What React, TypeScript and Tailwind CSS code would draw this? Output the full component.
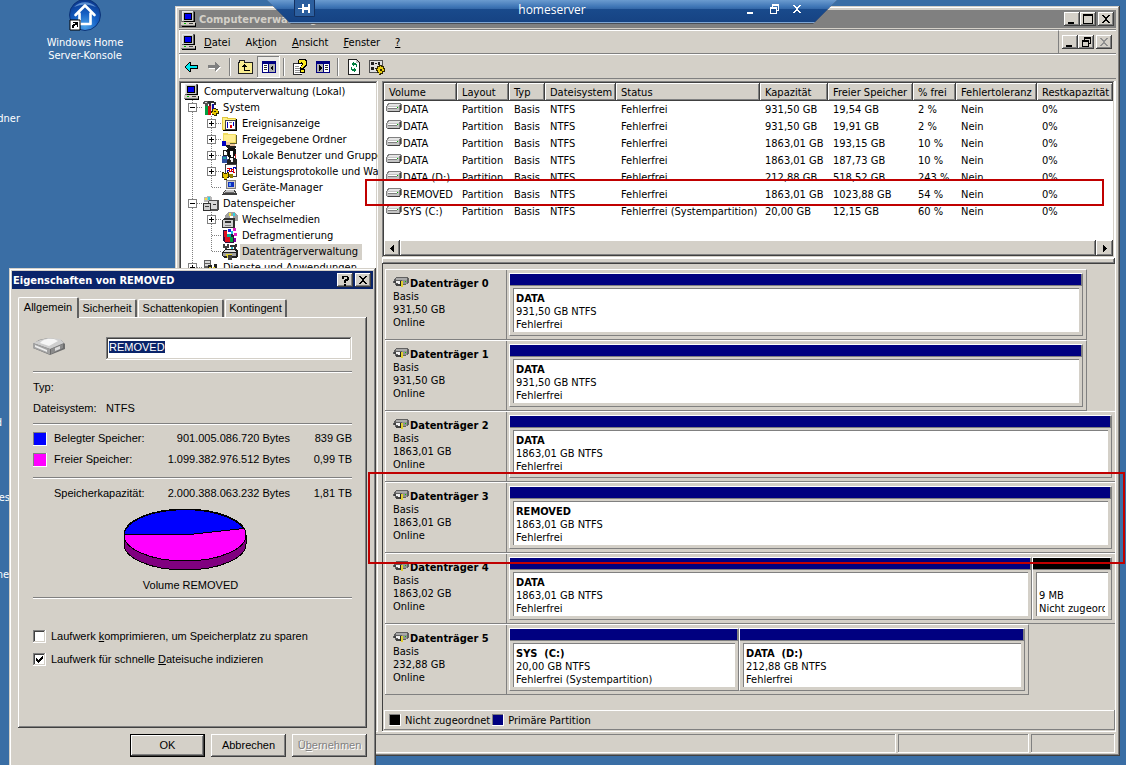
import { useEffect, useRef } from "react";
import type { ReactNode } from "react";

const RAISED =
  "shadow-[inset_-1px_-1px_0_#404040,inset_1px_1px_0_#fff,inset_-2px_-2px_0_#808080]";
const FRAME =
  "shadow-[inset_-1px_-1px_0_#404040,inset_1px_1px_0_#d4d0c8,inset_-2px_-2px_0_#808080,inset_2px_2px_0_#fff]";
const SUNKEN =
  "shadow-[inset_-1px_-1px_0_#fff,inset_1px_1px_0_#808080,inset_-2px_-2px_0_#d4d0c8,inset_2px_2px_0_#404040]";
const THIN_RAISED = "shadow-[inset_-1px_-1px_0_#808080,inset_1px_1px_0_#fff]";
const THIN_SUNKEN = "shadow-[inset_-1px_-1px_0_#fff,inset_1px_1px_0_#808080]";

/* ---------- icons ---------- */

function Svg({ w = 16, h = 16, children }: { w?: number; h?: number; children: ReactNode }) {
  return (
    <svg
      width={w}
      height={h}
      viewBox={`0 0 ${w} ${h}`}
      shapeRendering="crispEdges"
      aria-hidden="true"
      className="block shrink-0"
    >
      {children}
    </svg>
  );
}

function ComputerIcon() {
  return (
    <Svg>
      <path d="M1 0h12l1 1v10H1z" fill="#606060" />
      <path d="M1 0h11v1H2v9H1z" fill="#e8e8e8" />
      <path d="M2 1h10v9H2z" fill="#c8c8c8" />
      <path d="M3 2h8v7H3z" fill="#000" />
      <path d="M4 3h6v5H4z" fill="#0000f0" />
      <path d="M13 1h1v10H3v-1h10z" fill="#000" />
      <path d="M0 12h15v4H1z" fill="#000" />
      <path d="M0 11h14v4H0z" fill="#d4d0c8" />
      <path d="M0 14h14v1H0z" fill="#808080" />
      <path d="M3 12h2v1H3z" fill="#00c000" />
      <path d="M8 12h4v1H8z" fill="#404040" />
    </Svg>
  );
}

function SystemIcon() {
  return (
    <Svg>
      <path d="M0 2h1V1h4v1h2v2H5v2H2V4H0z" fill="#505050" />
      <path d="M2 2h2v1H2z" fill="#d8d8d8" />
      <path d="M2 6h3v9H2z" fill="#00a040" />
      <path d="M5 6h3v9H5z" fill="#d01010" />
      <path d="M5 1h6v1h2v3h-2V3H8v3H6V3H5z" fill="#303030" />
      <path d="M8 4h1v9H8z" fill="#e0e0e0" />
      <path d="M9 4h2v8H9z" fill="#1010a0" />
      <path d="M9 9h2V8h2v1h2v2h1v3h-2v2h-3v-1H9v-2H8v-2h1z" fill="#302800" />
      <path d="M10 9h3v1h2v3h-2v2h-2v-1H9v-2h1z" fill="#e8c800" />
      <path d="M11 11h2v1h-2z" fill="#302800" />
    </Svg>
  );
}

function EventIcon() {
  return (
    <Svg>
      <path d="M1 2h6v1h8v12H1z" fill="#000" />
      <path d="M0 1h6v1h8v12H0z" fill="#e0c840" />
      <path d="M1 2h4v1h8v10H1z" fill="#fff080" />
      <path d="M3 4h11v10H3z" fill="#404040" />
      <path d="M4 5h9v8H4z" fill="#fff" />
      <path d="M5 6h1v6H5zM11 6h1v4h-1z" fill="#0000c0" />
      <path d="M8 9h2v3H8z" fill="#e00000" />
      <path d="M7 6h3v1H7z" fill="#808080" />
    </Svg>
  );
}

function SharedFolderIcon() {
  return (
    <Svg>
      <path d="M1 2h6v1h8v9H1z" fill="#606030" />
      <path d="M1 1h5v1h8v9H1z" fill="#f0dc60" />
      <path d="M2 3h11v7H2z" fill="#ffee90" />
      <path d="M0 9h4v5H0z" fill="#0000c0" />
      <path d="M4 10h4v2h5v2H6v-1H4z" fill="#f0c8a0" />
      <path d="M4 13h4v1h6v2H5z" fill="#202020" />
    </Svg>
  );
}

function UsersIcon() {
  return (
    <Svg>
      <path d="M6 0h6l2 2v4h-1l-1 4H7L5 6V2z" fill="#101010" />
      <path d="M8 3h3v6H9V7H8z" fill="#fff" />
      <path d="M1 2h3v1h1v4H1z" fill="#fff" stroke="#202020" />
      <path d="M0 8h5v3h2v4H0z" fill="#3050a0" />
      <path d="M1 9h3v2H1z" fill="#20a0a0" />
      <path d="M7 10h6l2 2v4H5v-3z" fill="#202020" />
      <path d="M8 10h3v4H9z" fill="#f4f4f4" />
      <path d="M13 6h1v4h-1z" fill="#c02020" />
    </Svg>
  );
}

function PerfIcon() {
  return (
    <Svg>
      <path d="M3 0h12v13H3z" fill="#404040" />
      <path d="M4 1h10v11H4z" fill="#fff" />
      <path d="M5 8V6h2V4h2v3h2V3h2v2" fill="none" stroke="#0000c0" />
      <path d="M5 4h2v3h2V5h2v3h2" fill="none" stroke="#e00000" />
      <path d="M0 8h2v1h3V8h2v6H5v2H2v-2H0z" fill="#302800" />
      <path d="M1 9h1v1h3V9h1v4H5v2H2v-2H1z" fill="#e0c000" />
      <path d="M7 10h4v4H8z" fill="#908000" />
    </Svg>
  );
}

function DeviceManagerIcon() {
  return (
    <Svg>
      <path d="M4 0h10v9H4z" fill="#808080" />
      <path d="M5 1h8v7H5z" fill="#d4d0c8" />
      <path d="M6 2h6v5H6z" fill="#1030c0" />
      <path d="M7 3h2v3H7z" fill="#60a0f0" />
      <path d="M3 10h10l2 4v1H0z" fill="#404040" />
      <path d="M4 10h8l1 3H2z" fill="#c8c8c8" />
      <path d="M3 12h9v1H3z" fill="#707070" />
    </Svg>
  );
}

function StorageIcon() {
  return (
    <Svg>
      <path d="M1 1h3V0h4v1h1v5H1z" fill="#b8b8b8" />
      <path d="M2 2h2v2H2z" fill="#f0e040" />
      <path d="M5 1h2v3H5z" fill="#30d0e0" />
      <path d="M5 5l2-1h9v9l-2 2H5z" fill="#505050" />
      <path d="M6 5h8v8H6z" fill="#d8d8d8" />
      <path d="M0 7h8v8H0z" fill="#303030" />
      <path d="M1 8h6v6H1z" fill="#d0d0d0" />
      <path d="M2 10h4v1H2z" fill="#404040" />
      <path d="M10 8h3v1h-3z" fill="#303030" />
    </Svg>
  );
}

function RemovableIcon() {
  return (
    <Svg>
      <path d="M6 0h6l4 3v6h-5V7H3V4z" fill="#a0a0a0" />
      <path d="M7 1h2v3H7z" fill="#f0e040" />
      <path d="M11 1h2v3h-2z" fill="#30d0e0" />
      <path d="M8 4h3v2H8z" fill="#fff" />
      <path d="M0 8l2-2h10l1 1v9H0z" fill="#303030" />
      <path d="M1 8h10v7H1z" fill="#d0d0d0" />
      <path d="M3 9h6v2H3z" fill="#303030" />
      <path d="M3 13h6v1H3z" fill="#808080" />
    </Svg>
  );
}

function DefragIcon() {
  return (
    <Svg>
      <path d="M1 2h4v4h5l2 2v7H3l-2-2z" fill="#301040" />
      <path d="M2 3h3v6H2z" fill="#e01020" />
      <path d="M5 6h4v3H5z" fill="#00b0a0" />
      <path d="M3 9h5v5H3z" fill="#e01020" />
      <path d="M8 9h3v5H8z" fill="#00a040" />
      <path d="M6 1h3v3H6z" fill="#2020e0" />
      <path d="M11 0h3v3h-3zM12 5h3v3h-3z" fill="#e020c0" />
      <path d="M12 10h2v4h-2z" fill="#8000a0" />
      <path d="M9 3h2v3H9z" fill="#20c0e0" />
    </Svg>
  );
}

function DiskManagementIcon() {
  return (
    <Svg>
      <path d="M1 0h2v2h2V0h2v4H5v2H3V4H1z" fill="#404040" />
      <path d="M8 1h5V0h2v3h-1v3h-2V3H8z" fill="#303030" />
      <path d="M9 3h2v3H9z" fill="#30b0c0" />
      <path d="M0 8l3-3h11l2 2v5l-2 2H3l-3-2z" fill="#202020" />
      <path d="M3 6h10l1 2H2z" fill="#e0e0e0" />
      <path d="M1 9h13v3H1z" fill="#a0a0a0" />
      <path d="M4 10h6v4H5z" fill="#e0d030" />
      <path d="M6 11h4v5H6z" fill="#404040" />
    </Svg>
  );
}

function ServicesIcon() {
  return (
    <Svg>
      <path d="M1 0h7v9H1z" fill="#606060" />
      <path d="M2 1h5v2H2zM2 4h5v2H2z" fill="#d8d8d8" />
      <path d="M5 5h4v3h2V4h3v4h2v8H5z" fill="#202020" />
      <path d="M6 7h2v3h2V7h2v5H6z" fill="#e8d020" />
    </Svg>
  );
}

function VolumeIcon() {
  return (
    <Svg h={11}>
      <path d="M2 0h13v1h1v6h-1v1h-1v1H1V8H0V3h1V1h1z" fill="#808080" />
      <path d="M3 1h11v1h-1v1H2V2h1z" fill="#e4e4e4" />
      <path d="M1 3h12v5H1z" fill="#c4c4c4" />
      <path d="M2 4h9v1H2z" fill="#fff" />
      <path d="M2 5h9v1H2z" fill="#808080" />
      <path d="M11 4h1v1h-1z" fill="#00b000" />
      <path d="M14 2h1v5h-1zM2 8h12v1H2z" fill="#404040" />
    </Svg>
  );
}

function DiskIcon() {
  return (
    <Svg h={11}>
      <path d="M3 0h12v1h1v5h-1v1h-2v1H2V6H0V4h1V2h1V1h1z" fill="#606060" />
      <path d="M3 1h11v2H3z" fill="#a8a8a8" />
      <path d="M9 3h5v4H9z" fill="#909090" />
      <path d="M12 4h1v1h-1z" fill="#00d000" />
      <path d="M1 4h7v2H1z" fill="#404040" />
      <path d="M3 4h4v3H5V6H3z" fill="#f0f0f0" />
      <path d="M3 7h4v2H3z" fill="#404040" />
      <path d="M8 4h2v6H8z" fill="#e0d030" />
      <path d="M7 4h1v5H7z" fill="#202020" />
    </Svg>
  );
}

function ArrowIcon({ forward }: { forward?: boolean }) {
  return forward ? (
    <Svg>
      <path d="M2 7h7V4h1v1h1v1h1v1h1v1h1v1h-1v1h-1v1h-1v1h-1v1H9v-3H2z" fill="#fff" />
      <path d="M1 6h7V3h1v1h1v1h1v1h1v1h1v1h-1v1h-1v1h-1v1H9v1H8V9H1z" fill="#808080" />
    </Svg>
  ) : (
    <Svg>
      <path d="M1 7h1V6h1V5h1V4h1V3h2v3h7v4H7v3H5v-1H4v-1H3v-1H2V9H1z" fill="#000" />
      <path d="M2 8V7h1V6h1V5h1V4h1v3h7v2H6v3H5v-1H4v-1H3V9H2z" fill="#00e8f0" />
    </Svg>
  );
}

function FolderUpIcon() {
  return (
    <Svg>
      <path d="M1 1h6v2h8v12H0V3h1z" fill="#202020" />
      <path d="M2 2h4v2h8v10H1V4h1z" fill="#f8ec90" />
      <path d="M6 5h1v1h1v1h1v1H7v3h5v1H6V8H4V7h1V6h1z" fill="#000" />
    </Svg>
  );
}

function PaneIcon({ right }: { right?: boolean }) {
  return (
    <Svg>
      <path d="M1 2h14v12H1z" fill="#000080" />
      {right ? (
        <>
          <path d="M2 5h6v8H2z" fill="#b0b0b0" />
          <path d="M9 5h5v8H9z" fill="#fff" />
          <path d="M10 6h3v1h-3zM10 8h3v1h-3zM10 10h3v1h-3z" fill="#303030" />
          <path d="M4 6l3 3-3 3z" fill="#000" />
        </>
      ) : (
        <>
          <path d="M2 5h5v8H2z" fill="#fff" />
          <path d="M8 5h6v8H8z" fill="#b0b0b0" />
          <path d="M3 6h3v1H3zM3 8h3v1H3zM3 10h3v1H3z" fill="#303030" />
          <path d="M12 6L9 9l3 3z" fill="#000" />
        </>
      )}
    </Svg>
  );
}

function HelpIcon() {
  return (
    <Svg>
      <path d="M1 4h9v12H1z" fill="#303030" />
      <path d="M2 5h8v10H2z" fill="#fff" />
      <path d="M3 7h4v1H3zM3 9h5v1H3zM3 11h5v1H3zM3 13h5v1H3z" fill="#909090" />
      <path d="M6 1h1V0h7v1h1v6h-1v1h-1v1h-1v1H8V8h1V6h1V5H6z" fill="#000" />
      <path d="M7 1h6v1h1v4h-1v1h-1v1h-1v1H9V7h1V6h1V4h-1V3H9v1H7z" fill="#f8e820" />
      <path d="M8 10h5v4H8z" fill="#000" />
      <path d="M9 11h3v2H9z" fill="#f8e820" />
    </Svg>
  );
}

function RefreshIcon() {
  return (
    <Svg>
      <path d="M2 0h9v1h1v1h1v1h1v13H2z" fill="#202020" />
      <path d="M3 1h7v3h3v11H3z" fill="#fff" />
      <path d="M10 1h1v1h1v1h1v1h-3z" fill="#c0c0c0" />
      <path d="M7 3h1v1h2v1h1v3h-1V6H8v1H7V6H6V5H5V5h1V4h1z" fill="#008040" />
      <path d="M9 13H8v-1H6v-1H5V8h1v2h2V9h1v1h1v1h1v0h-1v1H9z" fill="#008040" />
    </Svg>
  );
}

function SettingsIcon() {
  return (
    <Svg>
      <path d="M0 1h14v13H0z" fill="#505050" />
      <path d="M1 2h12v11H1z" fill="#e0e0e0" />
      <path d="M2 3h3v3H2zM6 4h2v1H6zM9 3h2v3H9zM2 8h3v3H2zM6 9h2v1H6z" fill="#202020" />
      <path d="M8 7h2V6h3v1h2v2h1v4h-2v2h-2v1h-2v-2H8v-2H7V9h1z" fill="#302800" />
      <path d="M9 8h2V7h1v1h2v2h1v2h-2v2h-2v1h-1v-2H9v-2H8v-1h1z" fill="#e8cc10" />
      <path d="M11 10h2v2h-2z" fill="#302800" />
    </Svg>
  );
}

function HomeServerIcon() {
  return (
    <svg width="34" height="34" viewBox="0 0 34 34" aria-hidden="true">
      <defs>
        <radialGradient id="orb" cx="0.5" cy="0.85" r="0.8">
          <stop offset="0" stopColor="#4ba3ea" />
          <stop offset="0.5" stopColor="#1560c4" />
          <stop offset="1" stopColor="#0b3a92" />
        </radialGradient>
      </defs>
      <circle cx="17" cy="15" r="15.500" fill="url(#orb)" stroke="#0c3478" />
      <path d="M6 7a15 15 0 0 1 22 0q-11-5-22 0z" fill="#8fc0f0" opacity="0.6" />
      <path
        d="M7.500 15L17 5.500l9.500 9.500M11.500 13.500V24h11V13.500"
        fill="none"
        stroke="#fff"
        strokeWidth="2.600"
        strokeLinejoin="round"
        strokeLinecap="round"
      />
      <path d="M2 20h10v10H2z" fill="#fff" stroke="#000" strokeWidth="1" />
      <path d="M5 22h5v5H9v-2H7v1H6v2H4v-3h1v-1h2v-1H5z" fill="#000" />
    </svg>
  );
}

function DriveIcon() {
  return (
    <svg width="32" height="20" viewBox="0 0 32 20" aria-hidden="true" className="block">
      <path d="M0 7L6 3l9-2 13 2 4 4v5L17 18 0 11z" fill="#6c6c6c" />
      <path d="M0 6l7-3 8-2 12 1 4 4-14 6z" fill="#cfcfcf" />
      <path d="M7 6q4-5 14-4l4 2-9 5z" fill="#f6f6f6" />
      <path d="M0 6l17 6v5.500L0 11z" fill="#a2a2a2" />
      <path d="M2 8l12 5v2L2 10z" fill="#ececec" />
      <path d="M18 12l12-5v4l-12 6z" fill="#8c8c8c" />
      <path d="M22 11l5-2v3l-5 2z" fill="#dcdcdc" />
    </svg>
  );
}

type GlyphName = "min" | "max" | "restore" | "close" | "help";

function Glyph({ name, color = "#000" }: { name: GlyphName; color?: string }) {
  const paths: Record<GlyphName, string> = {
    min: "M2 9h6v2H2z",
    max: "M1 1h10v10H1zM2 3v7h8V3z",
    restore: "M4 1h7v7H9v3H2V4h2zM5 3v1h4v3h1V3zM3 6v4h5V6z",
    close: "M2 2h2v1h1v1h2V3h1V2h2v1H9v1H8v1H7v2h1v1h1v1h1v1H8V9H7V8H5v1H4v1H2V9h1V8h1V7h1V5H4V4H3V3H2z",
    help: "M3 2h6v1h1v3H9v1H7v2H5V6h1V5h2V3H5v2H3zM5 10h2v2H5z",
  };
  return (
    <Svg w={12} h={12}>
      <path d={paths[name]} fill={color} fillRule="evenodd" />
    </Svg>
  );
}

function CaptionButton({ name, label, disabled }: { name: GlyphName; label: string; disabled?: boolean }) {
  return (
    <button
      type="button"
      aria-label={label}
      disabled={disabled}
      className={`flex h-[14px] w-4 items-center justify-center bg-[#d4d0c8] ${RAISED}`}
    >
      <Glyph name={name} color={disabled ? "#909090" : "#000"} />
    </button>
  );
}

/* ---------- tree ---------- */

function Connector({ box, last, line }: { box?: "+" | "-"; last?: boolean; line?: boolean }) {
  return (
    <Svg w={19}>
      <path d={last ? "M8.500 0V8" : "M8.500 0V16"} stroke="#808080" strokeDasharray="1 1" />
      {!line && <path d="M9 7.500H19" stroke="#808080" strokeDasharray="1 1" />}
      {box && (
        <>
          <path d="M4 3h9v9H4z" fill="#808080" />
          <path d="M5 4h7v7H5z" fill="#fff" />
          <path d={box === "+" ? "M6 7h5v1H6zM8 5h1v5H8z" : "M6 7h5v1H6z"} fill="#000" />
        </>
      )}
    </Svg>
  );
}

type Node = { label: string; icon: ReactNode; level: number; box?: "+" | "-"; last?: boolean; selected?: boolean };

const tree: Node[] = [
  { label: "Computerverwaltung (Lokal)", icon: <ComputerIcon />, level: 0 },
  { label: "System", icon: <SystemIcon />, level: 1, box: "-" },
  { label: "Ereignisanzeige", icon: <EventIcon />, level: 2, box: "+" },
  { label: "Freigegebene Ordner", icon: <SharedFolderIcon />, level: 2, box: "+" },
  { label: "Lokale Benutzer und Gruppen", icon: <UsersIcon />, level: 2, box: "+" },
  { label: "Leistungsprotokolle und Warnungen", icon: <PerfIcon />, level: 2, box: "+" },
  { label: "Geräte-Manager", icon: <DeviceManagerIcon />, level: 2, last: true },
  { label: "Datenspeicher", icon: <StorageIcon />, level: 1, box: "-" },
  { label: "Wechselmedien", icon: <RemovableIcon />, level: 2, box: "+" },
  { label: "Defragmentierung", icon: <DefragIcon />, level: 2 },
  { label: "Datenträgerverwaltung", icon: <DiskManagementIcon />, level: 2, last: true, selected: true },
  { label: "Dienste und Anwendungen", icon: <ServicesIcon />, level: 1, box: "+", last: true },
];

function Tree() {
  return (
    <ul role="tree" className={`w-[199px] shrink-0 overflow-hidden bg-white px-[2px] py-[3px] ${SUNKEN}`}>
      {tree.map((n) => (
        <li key={n.label} role="treeitem" aria-selected={!!n.selected} className="flex h-4 items-center pl-[3px] whitespace-nowrap">
          {n.level === 2 && <Connector line />}
          {n.level > 0 && <Connector box={n.box} last={n.last} />}
          {n.icon}
          <span className={`ml-[2px] px-[2px] leading-4 ${n.selected ? "bg-[#d4d0c8] pr-1" : ""}`}>{n.label}</span>
        </li>
      ))}
    </ul>
  );
}

/* ---------- volume list ---------- */

const columns = ["Volume", "Layout", "Typ", "Dateisystem", "Status", "Kapazität", "Freier Speicher", "% frei", "Fehlertoleranz", "Restkapazität"];

const volumes = [
  ["DATA", "Fehlerfrei", "931,50 GB", "19,54 GB", "2 %"],
  ["DATA", "Fehlerfrei", "931,50 GB", "19,91 GB", "2 %"],
  ["DATA", "Fehlerfrei", "1863,01 GB", "193,15 GB", "10 %"],
  ["DATA", "Fehlerfrei", "1863,01 GB", "187,73 GB", "10 %"],
  ["DATA (D:)", "Fehlerfrei", "212,88 GB", "518,52 GB", "243 %"],
  ["REMOVED", "Fehlerfrei", "1863,01 GB", "1023,88 GB", "54 %"],
  ["SYS (C:)", "Fehlerfrei (Systempartition)", "20,00 GB", "12,15 GB", "60 %"],
];

function VolumeList() {
  return (
    <div className={`bg-white p-[2px] ${SUNKEN}`}>
      <table className="w-full table-fixed border-collapse">
        <colgroup>
          <col className="w-[73px]" />
          <col className="w-[52px]" />
          <col className="w-[36px]" />
          <col className="w-[71px]" />
          <col className="w-[144px]" />
          <col className="w-[68px]" />
          <col className="w-[85px]" />
          <col className="w-[43px]" />
          <col className="w-[81px]" />
          <col />
        </colgroup>
        <thead>
          <tr className="h-[18px]">
            {columns.map((c) => (
              <th key={c} className={`overflow-hidden bg-[#d4d0c8] p-0 pl-[5px] text-left font-normal whitespace-nowrap ${RAISED}`}>
                {c}
              </th>
            ))}
          </tr>
        </thead>
        <tbody>
          {volumes.map(([name, status, cap, free, pct], i) => (
            <tr key={i} className="h-[17px] whitespace-nowrap">
              <td className="p-0">
                <div className="flex items-start gap-[1px] pl-[2px]">
                  <VolumeIcon />
                  {name}
                </div>
              </td>
              {["Partition", "Basis", "NTFS", status, cap, free, pct, "Nein", "0%"].map((v, j) => (
                <td key={j} className="p-0 pl-[5px]">
                  {v}
                </td>
              ))}
            </tr>
          ))}
        </tbody>
      </table>
      <div className="mt-5 flex h-4 bg-[#d4d0c8]">
        <button type="button" aria-label="Nach links" className={`flex w-4 items-center justify-center ${RAISED}`}>
          <Svg w={4} h={7}>
            <path d="M3 0h1v7H3zM2 1h1v5H2zM1 2h1v3H1zM0 3h1v1H0z" />
          </Svg>
        </button>
        <div className={`flex-1 ${RAISED}`} />
        <button type="button" aria-label="Nach rechts" className={`flex w-[17px] items-center justify-center ${RAISED}`}>
          <Svg w={4} h={7}>
            <path d="M0 0h1v7H0zM1 1h1v5H1zM2 2h1v3H2zM3 3h1v1H3z" />
          </Svg>
        </button>
      </div>
    </div>
  );
}

/* ---------- disk view ---------- */

type Part = { name: string; size: string; state: string; width: string; free?: boolean };
type Disk = { size: string; margin: string; parts: Part[] };

const disks: Disk[] = [
  { size: "931,50 GB", margin: "mr-[28px] border-r pr-[3px]", parts: [{ name: "DATA", size: "931,50 GB NTFS", state: "Fehlerfrei", width: "flex-1" }] },
  { size: "931,50 GB", margin: "mr-[28px] border-r pr-[3px]", parts: [{ name: "DATA", size: "931,50 GB NTFS", state: "Fehlerfrei", width: "flex-1" }] },
  { size: "1863,01 GB", margin: "pr-[3px]", parts: [{ name: "DATA", size: "1863,01 GB NTFS", state: "Fehlerfrei", width: "flex-1" }] },
  { size: "1863,01 GB", margin: "pr-[3px]", parts: [{ name: "REMOVED", size: "1863,01 GB NTFS", state: "Fehlerfrei", width: "flex-1" }] },
  {
    size: "1863,02 GB",
    margin: "pr-[3px]",
    parts: [
      { name: "DATA", size: "1863,01 GB NTFS", state: "Fehlerfrei", width: "flex-1" },
      { name: "", size: "9 MB", state: "Nicht zugeordnet", width: "w-[80px]", free: true },
    ],
  },
  {
    size: "232,88 GB",
    margin: "mr-[86px] border-r pr-[3px]",
    parts: [
      { name: "SYS  (C:)", size: "20,00 GB NTFS", state: "Fehlerfrei (Systempartition)", width: "w-[230px]" },
      { name: "DATA  (D:)", size: "212,88 GB NTFS", state: "Fehlerfrei", width: "flex-1" },
    ],
  },
];

function Partition({ part }: { part: Part }) {
  return (
    <div className={`min-w-0 border border-t-white border-r-[#808080] border-b-[#808080] border-l-white ${part.width}`}>
      <div className={`h-3 border-r border-b border-[#808080] ${part.free ? "bg-black" : "bg-[#000080]"}`} />
      <div className="mx-[3px] mt-[2px] mb-[3px] h-11 overflow-hidden border-t border-l border-[#808080] bg-white pt-[3px] pr-[3px] pl-[2px]">
        <div className="overflow-hidden leading-[13px] whitespace-pre">
          <div className="h-[13px] font-bold">{part.name}</div>
          <div>{part.size}</div>
          <div>{part.state}</div>
        </div>
      </div>
    </div>
  );
}

function DiskView() {
  return (
    <div className="flex flex-col pt-[5px] pl-[2px]">
      {disks.map((d, i) => (
        <div key={i} className={`flex h-[71px] border-t border-b border-t-white border-b-[#808080] border-r-[#808080] ${d.margin}`}>
          <div className="mr-[2px] w-[122px] shrink-0 border-r border-l border-r-[#808080] border-l-white pt-[7px] pl-[7px] leading-[13px]">
            <div className="flex h-[13px] items-start gap-px font-bold whitespace-nowrap">
              <DiskIcon />
              Datenträger {i}
            </div>
            <div>Basis</div>
            <div>{d.size}</div>
            <div>Online</div>
          </div>
          <div className="flex min-w-0 flex-1 pt-[3px] pb-[3px]">
            {d.parts.map((p) => (
              <Partition key={p.name} part={p} />
            ))}
          </div>
        </div>
      ))}
    </div>
  );
}

/* ---------- main window ---------- */

function MenuItem({ pre = "", hot, post = "" }: { pre?: string; hot: string; post?: string }) {
  return (
    <button type="button" className="leading-4">
      {pre}
      <u>{hot}</u>
      {post}
    </button>
  );
}

function ToolButton({ label, pressed, children }: { label: string; pressed?: boolean; children: ReactNode }) {
  return (
    <button
      type="button"
      aria-label={label}
      className={`flex h-[22px] w-[23px] items-center justify-center ${pressed ? `bg-[#eae8e4] ${THIN_SUNKEN}` : ""}`}
    >
      {children}
    </button>
  );
}

function ToolSeparator() {
  return <div className="mx-[3px] h-[18px] w-[2px] border-r border-l border-r-white border-l-[#808080]" />;
}

function ManagementWindow() {
  return (
    <section aria-label="Computerverwaltung" className={`mt-[6px] mr-[6px] ml-[175px] bg-[#d4d0c8] px-1 pt-1 pb-[3px] ${FRAME}`}>
      <header className="flex h-[18px] items-center bg-[#808080] pr-[2px] pl-[2px]">
        <ComputerIcon />
        <h1 className="ml-[2px] flex-1 text-[11px] font-bold text-[#d4d0c8]">Computerverwaltung</h1>
        <CaptionButton name="min" label="Minimieren" />
        <CaptionButton name="max" label="Maximieren" />
        <div className="w-[2px]" />
        <CaptionButton name="close" label="Schließen" />
      </header>

      <div className="mt-px flex h-[25px] border-t border-b border-t-[#808080] border-b-[#808080]">
        <nav className="flex flex-1 items-center gap-[7px] border-t border-l border-white pl-px">
          <ComputerIcon />
          <div className="flex items-center gap-[15px] pt-px">
            <MenuItem hot="D" post="atei" />
            <MenuItem pre="Ak" hot="t" post="ion" />
            <MenuItem hot="A" post="nsicht" />
            <MenuItem hot="F" post="enster" />
            <MenuItem hot="?" />
          </div>
        </nav>
        <div className="flex items-center border-t border-l border-t-white border-l-[#808080] pr-1 pl-[3px]">
          <CaptionButton name="min" label="Fenster minimieren" />
          <CaptionButton name="restore" label="Fenster wiederherstellen" />
          <div className="w-[2px]" />
          <CaptionButton name="close" label="Fenster schließen" disabled />
        </div>
      </div>

      <div role="toolbar" aria-label="Werkzeuge" className="flex h-[25px] items-center border-t border-b border-l border-white border-b-[#808080]">
        <ToolButton label="Zurück"><ArrowIcon /></ToolButton>
        <ToolButton label="Vorwärts"><ArrowIcon forward /></ToolButton>
        <ToolSeparator />
        <ToolButton label="Aufwärts"><FolderUpIcon /></ToolButton>
        <ToolButton label="Konsolenstruktur" pressed><PaneIcon /></ToolButton>
        <ToolSeparator />
        <ToolButton label="Hilfe"><HelpIcon /></ToolButton>
        <ToolButton label="Aktionsbereich"><PaneIcon right /></ToolButton>
        <ToolSeparator />
        <ToolButton label="Aktualisieren"><RefreshIcon /></ToolButton>
        <ToolButton label="Einstellungen"><SettingsIcon /></ToolButton>
      </div>

      <div className="mt-[2px] flex gap-1">
        <Tree />
        <div className="flex min-w-0 flex-1 flex-col border-r border-b border-white">
          <VolumeList />
          <div className={`h-[6px] ${RAISED}`} />
          <div className="flex flex-col border-l border-[#404040] pb-px">
            <DiskView />
            <div className={`mt-[15px] ml-px flex h-5 items-center pl-[5px] ${THIN_RAISED}`}>
              <span className={`h-3 w-3 bg-black ${THIN_SUNKEN}`} />
              <span className="ml-1">Nicht zugeordnet</span>
              <span className={`ml-[2px] h-3 w-3 bg-[#000080] ${THIN_SUNKEN}`} />
              <span className="ml-1">Primäre Partition</span>
            </div>
          </div>
        </div>
      </div>

      <footer className="mt-[2px] flex h-[19px] gap-[2px] pr-px">
        <div className={`flex-1 ${THIN_SUNKEN}`} />
        <div className={`w-[131px] ${THIN_SUNKEN}`} />
        <div className={`w-[84px] ${THIN_SUNKEN}`} />
      </footer>
    </section>
  );
}

/* ---------- properties dialog ---------- */

function Rule() {
  return <div className="h-[2px] border-t border-b border-t-[#808080] border-b-white" />;
}

function SpaceRow({ color, label, bytes, size }: { color?: string; label: string; bytes: string; size: string }) {
  return (
    <div className="flex h-[21px] items-center">
      {color ? <span className={`h-[14px] w-[14px] ${color} ${THIN_SUNKEN}`} /> : <span className="w-[14px]" />}
      <span className="ml-[7px] w-[100px]">{label}</span>
      <span className="flex-1 text-right">{bytes}</span>
      <span className="w-[62px] text-right">{size}</span>
    </div>
  );
}

function CheckRow({ id, checked, children }: { id: string; checked?: boolean; children: ReactNode }) {
  return (
    <div className="flex h-[23px] items-center">
      <span className="relative h-[13px] w-[13px]">
        <input id={id} type="checkbox" defaultChecked={checked} className={`peer block h-[13px] w-[13px] appearance-none bg-white ${SUNKEN}`} />
        <span className="pointer-events-none absolute top-[3px] left-[3px] hidden peer-checked:block">
          <Svg w={7} h={7}>
            <path d="M0 2h1v1h1v1h1V3h1V2h1V1h1V0h1v3H6v1H5v1H4v1H3v1H2V6H1V5H0z" />
          </Svg>
        </span>
      </span>
      <label htmlFor={id} className="ml-[5px]">
        {children}
      </label>
    </div>
  );
}

function Pie() {
  return (
    <svg width="124" height="64" viewBox="0 0 124 64" role="img" aria-label="Speicherbelegung" shapeRendering="crispEdges">
      <path d="M1 27v9a61 26 0 0 0 122 0v-9z" fill="#800080" stroke="#000" />
      <ellipse cx="62" cy="27" rx="61" ry="26" fill="#f0f" stroke="#000" />
      <path d="M1 26A61 26 0 0 1 120.500 20.500L62 27z" fill="#00f" stroke="#000" />
    </svg>
  );
}

function Dialog() {
  const field = useRef<HTMLInputElement>(null);
  useEffect(() => {
    field.current?.focus({ preventScroll: true });
    field.current?.select();
  }, []);

  return (
    <section
      role="dialog"
      aria-label="Eigenschaften von REMOVED"
      className={`absolute top-[268px] left-[9px] w-[367px] bg-[#d4d0c8] px-[3px] pt-[3px] pb-[11px] [font-family:'Liberation_Sans',Arial,sans-serif] ${FRAME}`}
    >
      <header className="flex h-[18px] items-center bg-[#0a246a] pr-[2px] pl-px [font-family:'DejaVu_Sans_Condensed',sans-serif]">
        <h2 className="flex-1 text-[11px] font-bold text-white">Eigenschaften von REMOVED</h2>
        <CaptionButton name="help" label="Hilfe" />
        <div className="w-[2px]" />
        <CaptionButton name="close" label="Dialog schließen" />
      </header>

      <div className="px-[6px] pt-2">
        <div role="tablist" className="flex items-end">
          <button
            type="button"
            role="tab"
            aria-selected="true"
            className="relative z-10 -mb-px h-[21px] w-[61px] rounded-t-[2px] border-t border-r-2 border-l border-white border-r-[#606060] bg-[#d4d0c8] pb-[2px]"
          >
            Allgemein
          </button>
          <button type="button" role="tab" className="h-[18px] w-[58px] rounded-t-[2px] border-t border-r-2 border-white border-r-[#606060]">
            Sicherheit
          </button>
          <button type="button" role="tab" className="ml-px h-[18px] w-[86px] rounded-t-[2px] border-t border-r-2 border-l border-white border-r-[#606060]">
            Schattenkopien
          </button>
          <button type="button" role="tab" className="ml-px h-[18px] w-[62px] rounded-t-[2px] border-t border-r-2 border-l border-white border-r-[#606060]">
            Kontingent
          </button>
        </div>

        <div role="tabpanel" className={`h-[411px] pr-[15px] pl-[15px] ${RAISED}`}>
          <div className="flex h-[54px] items-start pt-5">
            <div className="w-[73px]">
              <DriveIcon />
            </div>
            <input
              ref={field}
              aria-label="Volumebezeichnung"
              defaultValue="REMOVED"
              className={`h-[23px] min-w-0 flex-1 bg-white px-[3px] pb-1 outline-none selection:bg-[#0a246a] selection:text-white ${SUNKEN}`}
            />
          </div>
          <Rule />
          <div className="flex h-[50px] flex-col pt-1">
            <div className="flex h-[21px] items-center">Typ:</div>
            <div className="flex h-[21px] items-center">
              <span className="w-[73px]">Dateisystem:</span>
              <span>NTFS</span>
            </div>
          </div>
          <Rule />
          <div className="pt-[3px] pb-[7px]">
            <SpaceRow color="bg-[#0000ff]" label="Belegter Speicher:" bytes="901.005.086.720 Bytes" size="839 GB" />
            <SpaceRow color="bg-[#ff00ff]" label="Freier Speicher:" bytes="1.099.382.976.512 Bytes" size="0,99 TB" />
          </div>
          <Rule />
          <div className="pt-[4px]">
            <SpaceRow label="Speicherkapazität:" bytes="2.000.388.063.232 Bytes" size="1,81 TB" />
          </div>
          <div className="flex flex-col items-center pt-1 pr-[15px]">
            <Pie />
          </div>
          <div className="flex h-[25px] items-center justify-center pt-[2px] pr-1">Volume REMOVED</div>
          <Rule />
          <div className="pt-[26px]">
            <CheckRow id="compress">
              Laufwerk <u>k</u>omprimieren, um Speicherplatz zu sparen
            </CheckRow>
            <CheckRow id="index" checked>
              Laufwerk für schnelle <u>D</u>ateisuche indizieren
            </CheckRow>
          </div>
        </div>

        <div className="mt-[6px] flex justify-end gap-[6px]">
          <div className="bg-black p-px">
            <button type="button" className={`block h-[21px] w-[73px] bg-[#d4d0c8] ${RAISED}`}>
              OK
            </button>
          </div>
          <button type="button" className={`h-[23px] w-[75px] ${RAISED}`}>
            Abbrechen
          </button>
          <button type="button" disabled className={`h-[23px] w-[75px] text-[#808080] [text-shadow:1px_1px_0_#fff] ${RAISED}`}>
            Ü<u>b</u>ernehmen
          </button>
        </div>
      </div>
    </section>
  );
}

/* ---------- remote session bar ---------- */

function SessionBar() {
  return (
    <div className="absolute top-0 left-[267px] flex h-6 w-[570px] bg-[#4a4f58] [clip-path:polygon(0_0,100%_0,calc(100%_-_24px)_100%,24px_100%)]">
      <div className="flex h-[23px] flex-1 items-start justify-between border-b border-[#7fa6d4] bg-[linear-gradient(#6b9bcf,#3f76b6_30%,#3468a8_40%,#194a8c_42%,#164383)] pr-[34px] pl-[27px]">
        <button type="button" aria-label="Anheften" className="flex h-[17px] w-[21px] items-center justify-center rounded-b-[2px] border border-t-0 border-[#14305f] bg-[#2c5f9f]">
          <Svg w={14} h={9}>
            <path d="M0 4h4v1H0zM4 0h2v9H4zM6 3h4v3H6zM10 0h2v9h-2z" fill="#fff" />
          </Svg>
        </button>
        <span className="flex-1 pl-[44px] text-center text-[12px] leading-5 text-white [font-family:'Open_Sans','Noto_Sans',sans-serif]">homeserver</span>
        <div className="flex items-center gap-[11px] pt-[3px]">
          <button type="button" aria-label="Sitzung minimieren"><Glyph name="min" color="#fff" /></button>
          <button type="button" aria-label="Sitzung wiederherstellen"><Glyph name="restore" color="#fff" /></button>
          <button type="button" aria-label="Sitzung schließen"><Glyph name="close" color="#fff" /></button>
        </div>
      </div>
    </div>
  );
}

export default function App() {
  return (
    <main className="relative flow-root min-h-screen overflow-hidden bg-[#3a6ea5] text-[11px] leading-[13px] text-black [font-family:'DejaVu_Sans_Condensed',sans-serif]">
      <a href="#konsole" className="absolute top-0 left-10 flex w-[90px] flex-col items-center text-center leading-[13px] text-white">
        <HomeServerIcon />
        <span className="mt-[2px]">Windows Home Server-Konsole</span>
      </a>
      <span className="absolute top-[112px] right-full -mr-5 text-white">Ordner</span>
      <span className="absolute top-[416px] right-full -mr-[2px] text-white">d</span>
      <span className="absolute top-[491px] right-full -mr-[10px] text-white">es</span>
      <span className="absolute top-[568px] right-full -mr-[9px] text-white">ne</span>

      <ManagementWindow />
      <Dialog />
      <SessionBar />

      <div className="pointer-events-none absolute top-[179px] right-[22px] left-[365px] h-[27px] border-2 border-[#c00000]" />
      <div className="pointer-events-none absolute top-[472px] right-px left-[368px] h-[92px] border-2 border-[#c00000]" />
    </main>
  );
}
